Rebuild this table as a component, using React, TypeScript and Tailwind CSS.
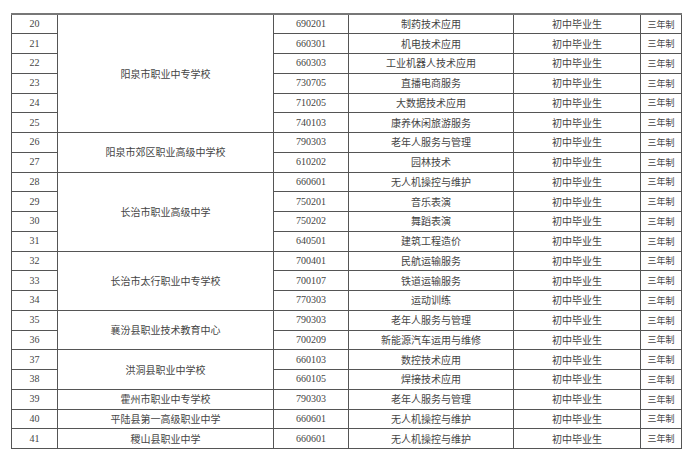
import React from 'react'

type Row = { no: number; code: string; major: string }
type Group = { school: string; rows: Row[] }

const groups: Group[] = [
  {
    school: '阳泉市职业中专学校',
    rows: [
      { no: 20, code: '690201', major: '制药技术应用' },
      { no: 21, code: '660301', major: '机电技术应用' },
      { no: 22, code: '660303', major: '工业机器人技术应用' },
      { no: 23, code: '730705', major: '直播电商服务' },
      { no: 24, code: '710205', major: '大数据技术应用' },
      { no: 25, code: '740103', major: '康养休闲旅游服务' },
    ],
  },
  {
    school: '阳泉市郊区职业高级中学校',
    rows: [
      { no: 26, code: '790303', major: '老年人服务与管理' },
      { no: 27, code: '610202', major: '园林技术' },
    ],
  },
  {
    school: '长治市职业高级中学',
    rows: [
      { no: 28, code: '660601', major: '无人机操控与维护' },
      { no: 29, code: '750201', major: '音乐表演' },
      { no: 30, code: '750202', major: '舞蹈表演' },
      { no: 31, code: '640501', major: '建筑工程造价' },
    ],
  },
  {
    school: '长治市太行职业中专学校',
    rows: [
      { no: 32, code: '700401', major: '民航运输服务' },
      { no: 33, code: '700107', major: '铁道运输服务' },
      { no: 34, code: '770303', major: '运动训练' },
    ],
  },
  {
    school: '襄汾县职业技术教育中心',
    rows: [
      { no: 35, code: '790303', major: '老年人服务与管理' },
      { no: 36, code: '700209', major: '新能源汽车运用与维修' },
    ],
  },
  {
    school: '洪洞县职业中学校',
    rows: [
      { no: 37, code: '660103', major: '数控技术应用' },
      { no: 38, code: '660105', major: '焊接技术应用' },
    ],
  },
  { school: '霍州市职业中专学校', rows: [{ no: 39, code: '790303', major: '老年人服务与管理' }] },
  { school: '平陆县第一高级职业中学', rows: [{ no: 40, code: '660601', major: '无人机操控与维护' }] },
  { school: '稷山县职业中学', rows: [{ no: 41, code: '660601', major: '无人机操控与维护' }] },
]

const cell = 'border border-[#555] p-0 text-center align-middle'
const num = "font-['Liberation_Serif',serif]"

export default function App() {
  return (
    <div className="h-[457px] w-[688px] bg-white pl-[11px] pt-[13px] font-['Noto_Sans_CJK_SC',sans-serif] text-[10px] leading-none text-[#444]">
      <table className="w-[670px] table-fixed border-collapse border-t-2 border-t-[#777]">
        <colgroup>
          <col className="w-[46px]" />
          <col className="w-[216px]" />
          <col className="w-[75px]" />
          <col className="w-[165px]" />
          <col className="w-[127px]" />
          <col className="w-[41px]" />
        </colgroup>
        <tbody>
          {groups.map((g) =>
            g.rows.map((r, i) => (
              <tr key={r.no} className="h-[19.75px]">
                <td className={`${cell} ${num}`}>{r.no}</td>
                {i === 0 && (
                  <td className={cell} rowSpan={g.rows.length}>
                    {g.school}
                  </td>
                )}
                <td className={`${cell} ${num}`}>{r.code}</td>
                <td className={cell}>{r.major}</td>
                <td className={cell}>初中毕业生</td>
                <td className={`${cell} text-[9px]`}>三年制</td>
              </tr>
            )),
          )}
        </tbody>
      </table>
    </div>
  )
}
